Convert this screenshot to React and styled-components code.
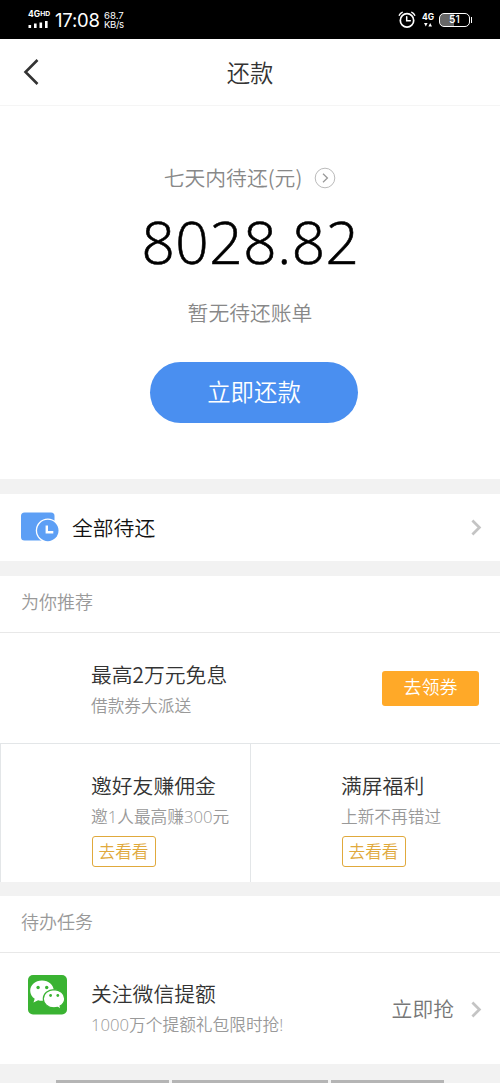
import React from 'react'
import styled, { createGlobalStyle } from 'styled-components'

const App = () => {
  return (
    <Page>
      <GlobalStyle />
      <StatusBar>
        <Signal>
          <span>4G<sup>HD</sup></span>
          <svg width="22" height="8" viewBox="0 0 22 8" fill="#fff">
            <rect x="0.5" y="4" width="2.6" height="3" />
            <rect x="6" y="2.5" width="2.6" height="4.5" />
            <rect x="11.5" y="1.5" width="2.6" height="5.5" />
            <rect x="17" y="0" width="2.6" height="7" />
          </svg>
        </Signal>
        <Time>17:08</Time>
        <Speed>
          <span>68.7</span>
          <span>KB/s</span>
        </Speed>
        <StatusRight>
          <AlarmIcon />
          <Network>
            <span>4G</span>
            <svg width="8" height="4" viewBox="0 0 8 4" fill="#fff">
              <path d="M0 0h3.6L1.8 3.6zM4.4 3.6H8L6.2 0z" />
            </svg>
          </Network>
          <Battery>51</Battery>
        </StatusRight>
      </StatusBar>

      <Header>
        <BackIcon />
        <Title>还款</Title>
      </Header>

      <Summary>
        <DueLabel>
          <span>七天内待还(元)</span>
          <CircleArrow />
        </DueLabel>
        <Amount>8028.82</Amount>
        <Hint>暂无待还账单</Hint>
        <PayButton>立即还款</PayButton>
      </Summary>

      <AllRow>
        <BillIcon />
        <AllText>全部待还</AllText>
        <Arrow />
      </AllRow>

      <Section>
        <SectionTitle>为你推荐</SectionTitle>
        <Row>
          <Info>
            <Name>最高2万元免息</Name>
            <Desc>借款券大派送</Desc>
          </Info>
          <CouponButton>去领券</CouponButton>
        </Row>
        <Cards>
          <Card>
            <Name>邀好友赚佣金</Name>
            <Desc>邀1人最高赚300元</Desc>
            <LookButton>去看看</LookButton>
          </Card>
          <Card>
            <Name>满屏福利</Name>
            <Desc>上新不再错过</Desc>
            <LookButton>去看看</LookButton>
          </Card>
        </Cards>
      </Section>

      <Section>
        <SectionTitle>待办任务</SectionTitle>
        <Row $task>
          <WechatIcon />
          <Info $task>
            <Name>关注微信提额</Name>
            <Desc>1000万个提额礼包限时抢!</Desc>
          </Info>
          <Grab>立即抢</Grab>
          <Arrow />
        </Row>
      </Section>

      <NavHints>
        <NavHint $width={113} />
        <NavHint $width={156} />
        <NavHint $width={113} />
      </NavHints>
    </Page>
  )
}

export default App

const AlarmIcon = () => (
  <svg width="18" height="18" viewBox="0 0 18 18" fill="none" stroke="#fff" strokeLinecap="round">
    <circle cx="9" cy="9.4" r="6.7" strokeWidth="1.7" />
    <path d="M8.7 5.8v4h3.6" strokeWidth="1.5" />
    <path d="M1.3 4.2Q2.2 2.2 4.2 1.4M16.7 4.2Q15.8 2.2 13.8 1.4" strokeWidth="1.5" />
  </svg>
)

const BackIcon = () => (
  <svg width="18" height="28" viewBox="0 0 18 28" fill="none" stroke="#333" strokeWidth="2.6">
    <path d="M15.5 2 3.5 14l12 12" />
  </svg>
)

const CircleArrow = () => (
  <svg width="22" height="22" viewBox="0 0 22 22" fill="none">
    <circle cx="11" cy="11" r="9.8" stroke="#bbb" strokeWidth="1" />
    <path d="m9 6.8 4.4 4.2L9 15.2" stroke="#999" strokeWidth="1.3" />
  </svg>
)

const BillIcon = () => (
  <svg width="38" height="32" viewBox="0 0 38 32">
    <rect x="0" y="0.5" width="33.5" height="28" rx="3.5" fill="#5d9ff5" />
    <circle cx="26.8" cy="18.5" r="12" fill="#fff" />
    <circle cx="26.8" cy="18.5" r="10.7" fill="#5d9ff5" />
    <path d="M25.8 13.5v6.8h6.5" fill="none" stroke="#fff" strokeWidth="2.4" />
  </svg>
)

const Arrow = () => (
  <svg width="11" height="17" viewBox="0 0 11 17" fill="none" stroke="#c4c4c4" strokeWidth="2.7">
    <path d="m1.4 1.5 7 7-7 7" />
  </svg>
)

const WechatIcon = () => (
  <svg width="39" height="40" viewBox="0 0 39 40">
    <rect width="39" height="39.5" rx="5" fill="#3ab332" />
    <path d="M14 5.5C7.3 5.5 2.2 10 2.2 15.8c0 3.2 1.7 6.1 4.5 8L5.5 27.5l4.6-2.3c1.3.4 2.5.5 3.9.5 6.7 0 11.8-4.4 11.8-10S20.7 5.5 14 5.5z" fill="#fff" />
    <path d="M26 14.6c-6 0-10.7 4.1-10.7 9.1s4.7 9.1 10.7 9.1c1.2 0 2.5-.2 3.6-.5l3.5 2-1-3.2c2.7-1.7 4.6-4.3 4.6-7.4 0-5-4.7-9.1-10.7-9.1z" fill="#fff" stroke="#3ab332" strokeWidth="1.2" />
    <g fill="#3ab332">
      <circle cx="10.1" cy="12.5" r="1.7" />
      <circle cx="18.7" cy="12.5" r="1.7" />
      <circle cx="22.6" cy="20.5" r="1.4" />
      <circle cx="29.8" cy="20.5" r="1.4" />
    </g>
  </svg>
)

const GlobalStyle = createGlobalStyle`
  * {
    box-sizing: border-box;
  }
  body {
    margin: 0;
    background: #f2f2f2;
  }
  svg {
    display: block;
    flex: none;
  }
  button {
    font-family: inherit;
    font-weight: inherit;
    padding: 0;
  }
`

const Page = styled.div`
  width: 500px;
  height: 1083px;
  overflow: hidden;
  display: flex;
  flex-direction: column;
  background: #f2f2f2;
  font-family: 'Noto Sans CJK SC', sans-serif;
  font-weight: 350;
  white-space: nowrap;
`

const StatusBar = styled.div`
  height: 39px;
  flex: none;
  display: flex;
  align-items: center;
  padding: 0 30px 0 28px;
  background: #000;
  color: #fff;
  font-family: Inter, sans-serif;
`

const Signal = styled.div`
  width: 27px;
  display: flex;
  flex-direction: column;
  gap: 3px;
  font-size: 8.5px;
  font-weight: 700;
  line-height: 8px;

  sup {
    font-size: 6.8px;
    line-height: 1;
    vertical-align: 1.5px;
  }
`

const Time = styled.div`
  width: 49px;
  font-size: 18.5px;
  font-weight: 400;
  line-height: 24px;
  letter-spacing: -0.2px;
  padding-top: 1px;
`

const Speed = styled.div`
  display: flex;
  flex-direction: column;
  font-size: 9.6px;
  font-weight: 400;
  line-height: 9px;
  padding-top: 1px;

  span:last-child {
    letter-spacing: -0.4px;
  }
`

const StatusRight = styled.div`
  margin-left: auto;
  display: flex;
  align-items: center;
`

const Network = styled.div`
  width: 12px;
  margin: 0 5px 0 6px;
  display: flex;
  flex-direction: column;
  align-items: center;
  gap: 2px;
  font-size: 8.5px;
  font-weight: 700;
  line-height: 8px;
`

const Battery = styled.div`
  position: relative;
  width: 31px;
  height: 14px;
  border: 1.5px solid #fff;
  border-radius: 5px;
  background: linear-gradient(90deg, #666 0 50%, #000 50%);
  font-size: 10.5px;
  font-weight: 500;
  line-height: 12px;
  text-align: center;

  &::after {
    content: '';
    position: absolute;
    right: -3px;
    top: 3px;
    width: 1.5px;
    height: 6px;
    background: #fff;
  }
`

const Header = styled.div`
  height: 67px;
  flex: none;
  display: grid;
  grid-template-columns: 60px 1fr 60px;
  align-items: center;
  background: #fff;
  border-bottom: 1px solid #f5f5f5;

  svg {
    margin-left: 22px;
  }
`

const Title = styled.div`
  text-align: center;
  padding-bottom: 1px;
  color: #333;
  font-size: 23.3px;
  line-height: 30px;
`

const Summary = styled.div`
  height: 373px;
  flex: none;
  display: flex;
  flex-direction: column;
  align-items: center;
  padding-top: 56px;
  background: #fff;
`

const DueLabel = styled.div`
  display: flex;
  align-items: center;
  gap: 12px;
  color: #888;
  font-size: 20.8px;
  line-height: 30px;

  span {
    padding-bottom: 2px;
  }
`

const Amount = styled.div`
  margin-top: 12px;
  padding-left: 1px;
  color: #000;
  font-family: 'Open Sans', sans-serif;
  font-size: 58.5px;
  font-weight: 300;
  line-height: 70px;
  letter-spacing: 0.55px;
  -webkit-text-stroke: 0.6px #000;
`

const Hint = styled.div`
  margin-top: 21px;
  color: #888;
  font-size: 20.8px;
  line-height: 30px;
`

const PayButton = styled.button`
  width: 208px;
  height: 61px;
  margin: 35px 0 0 8px;
  padding-bottom: 3px;
  border: 0;
  border-radius: 31px;
  background: #4a8ff0;
  color: #fff;
  font-size: 23.4px;
  line-height: 30px;
`

const AllRow = styled.div`
  height: 67px;
  margin: 15px 0;
  flex: none;
  display: flex;
  align-items: center;
  padding: 0 18px 0 21px;
  background: #fff;
`

const AllText = styled.div`
  flex: 1;
  margin-left: 13px;
  padding-bottom: 2px;
  color: #111;
  font-size: 20.8px;
  line-height: 30px;
`

const Section = styled.div`
  flex: none;
  margin-bottom: 14px;
  background: #fff;
`

const SectionTitle = styled.div`
  height: 57px;
  padding: 12px 21px 0;
  border-bottom: 1px solid #e8e8e8;
  color: #999;
  font-size: 18px;
  line-height: 26px;
`

const Row = styled.div`
  display: flex;
  align-items: center;
  height: ${({ $task }) => ($task ? 111 : 110)}px;
  padding: ${({ $task }) => ($task ? '0 18px 0 28px' : '0 21px 0 91px')};

  & > svg:first-child {
    margin-bottom: 28px;
  }
  & > svg:last-child {
    margin-top: 2px;
  }
`

const Info = styled.div`
  flex: 1;
  margin-left: ${({ $task }) => ($task ? 24 : 0)}px;
  padding-top: ${({ $task }) => ($task ? 0 : 3)}px;
`

const Name = styled.div`
  color: #333;
  font-size: 20.8px;
  line-height: 30px;
`

const Desc = styled.div`
  margin-top: 2px;
  color: #999;
  font-family: 'Open Sans', 'Noto Sans CJK SC', sans-serif;
  font-size: 16.7px;
  line-height: 30px;
`

const CouponButton = styled.button`
  width: 97px;
  height: 35px;
  padding-bottom: 4px;
  border: 0;
  border-radius: 3px;
  background: #ffa928;
  color: #fff;
  font-size: 18px;
  line-height: 26px;
`

const Cards = styled.div`
  display: grid;
  grid-template-columns: 1fr 1fr;
  border-top: 1px solid #e3e6e8;
`

const Card = styled.div`
  height: 138px;
  padding: 26px 0 0 90px;
  border-left: 1px solid #e3e6e8;
`

const LookButton = styled.button`
  width: 64px;
  height: 31px;
  margin: 4px 0 0 0.5px;
  padding-bottom: 2px;
  display: block;
  border: 1.5px solid #e0a93c;
  border-radius: 3px;
  background: #fff;
  color: #e0a93c;
  font-size: 16.7px;
  line-height: 24px;
`

const Grab = styled.div`
  margin-right: 17px;
  padding-bottom: 2px;
  color: #777;
  font-size: 20.8px;
  line-height: 30px;
`

const NavHints = styled.div`
  flex: none;
  margin-top: 2px;
  display: flex;
  justify-content: center;
  gap: 3px;
`

const NavHint = styled.div`
  width: ${({ $width }) => $width}px;
  height: 4px;
  background: #b5b5b5;
`
